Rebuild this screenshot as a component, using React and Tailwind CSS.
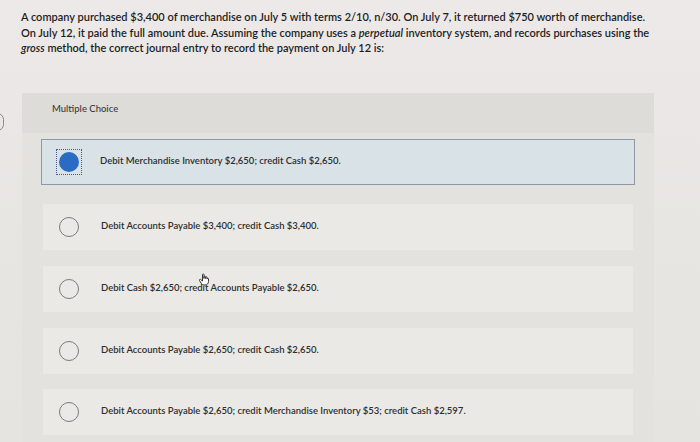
import React from "react";

const font = { fontFamily: "Lato, 'Liberation Sans', sans-serif" };

function EmptyRadio() {
  return <div className="w-[20px] h-[20px] rounded-full border-[1.5px] border-[#7b7b7b] shrink-0" />;
}

function Row({ children, extra = "" }) {
  return (
    <div className={`mx-[2px] h-[46px] bg-[#eae9e6] flex items-center ${extra}`}>
      <div className="ml-[16px] w-[42px] shrink-0">
        <EmptyRadio />
      </div>
      <span className="text-[9.5px] font-semibold text-[#2e2e2e] whitespace-nowrap">{children}</span>
    </div>
  );
}

export default function App() {
  return (
    <div
      className="w-[700px] h-[442px] overflow-hidden relative bg-linear-to-b from-[#ece9e8] via-[#e8e6e3] to-[#e5e4e0]"
      style={font}
    >
      <div className="absolute left-[-9px] top-[113px] w-[13px] h-[18px] rounded-full border border-[#8a8a8a]" />
      <p className="pl-[21px] pt-[9px] text-[11px] leading-[15.5px] font-semibold text-[#1e1e1e] whitespace-nowrap">
        A company purchased $3,400 of merchandise on July 5 with terms 2/10, n/30. On July 7, it returned $750 worth of merchandise.
        <br />
        On July 12, it paid the full amount due. Assuming the company uses a <i>perpetual</i> inventory system, and records purchases using the
        <br />
        <i>gross</i> method, the correct journal entry to record the payment on July 12 is:
      </p>
      <div className="ml-[22px] mt-[37px] w-[632px]">
        <div className="h-[40px] bg-[#dedcd9] pl-[30px] pt-[10px]">
          <span className="text-[9.5px] leading-[12px] font-medium text-[#3a3a3a] block">Multiple Choice</span>
        </div>
        <div className="bg-[#e3e2df] px-[19px] pt-[6px] pb-[7px]">
          <div className="h-[46px] bg-[#d9e2e7] border border-[#8d98a2] flex items-center">
            <div className="ml-[14px] w-[44px] shrink-0">
              <div className="w-[26px] h-[26px] border border-dotted border-[#3f5f8f] flex items-center justify-center">
                <div className="w-[20px] h-[20px] rounded-full bg-[#2a6bc3]" />
              </div>
            </div>
            <span className="text-[9.5px] font-semibold text-[#2e2e2e] whitespace-nowrap">
              Debit Merchandise Inventory $2,650; credit Cash $2,650.
            </span>
          </div>
          <Row extra="mt-[19px]">Debit Accounts Payable $3,400; credit Cash $3,400.</Row>
          <div className="relative mt-[16px]">
            <Row>Debit Cash $2,650; credit Accounts Payable $2,650.</Row>
            <svg
              className="absolute left-[157px] top-[7px]"
              width="12"
              height="13"
              viewBox="0 0 24 26"
              fill="#fff"
              stroke="#333"
              strokeWidth="2"
              strokeLinejoin="round"
            >
              <path d="M9 12V3.5a1.5 1.5 0 0 1 3 0V11l0-3a1.5 1.5 0 0 1 3 0v3l0-2a1.5 1.5 0 0 1 3 0v3a1.5 1.5 0 0 1 3 0v5c0 4-3 7-7 7h-2c-3 0-4.5-1.5-6-4l-3-5a1.5 1.5 0 0 1 2.5-1.7L9 16z" />
            </svg>
          </div>
          <Row extra="mt-[16px]">Debit Accounts Payable $2,650; credit Cash $2,650.</Row>
          <Row extra="mt-[15px]">
            Debit Accounts Payable $2,650; credit Merchandise Inventory $53; credit Cash $2,597.
          </Row>
        </div>
      </div>
    </div>
  );
}
